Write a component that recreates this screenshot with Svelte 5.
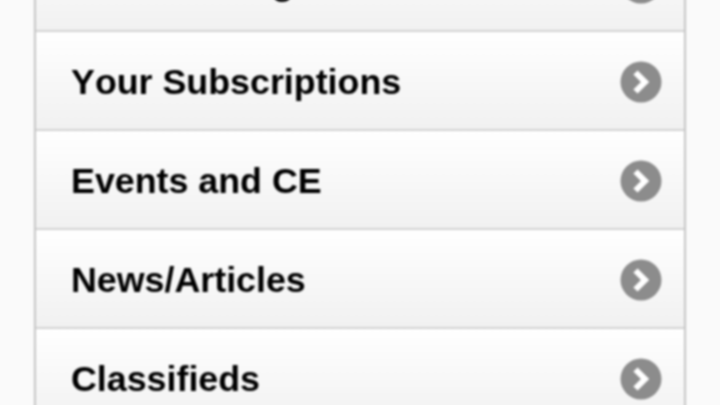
<script>
  const items = ["Your Postings", "Your Subscriptions", "Events and CE", "News/Articles", "Classifieds"];
</script>

<div class="page">
  <ul class="list">
    {#each items as item}
      <li class="row">
        <span class="label">{item}</span>
        <svg class="chevron" viewBox="0 0 42 42" width="42" height="42" aria-hidden="true">
          <circle cx="21" cy="21" r="20.5" fill="#8c8c8c" />
          <path d="M15.5 11.5 L25 21 L15.5 30.5" fill="none" stroke="#fff" stroke-width="6" />
        </svg>
      </li>
    {/each}
  </ul>
</div>

<style>
  :global(body) {
    margin: 0;
    background: #fafafa;
    overflow: hidden;
  }

  .page {
    height: 405px;
    overflow: hidden;
    padding: 0 34px;
    box-sizing: border-box;
  }

  /* the source is an upscaled phone shot, so everything is soft */
  .list {
    list-style: none;
    margin: -67px 0 0;
    padding: 0;
    border-left: 2px solid #c6c6c6;
    border-right: 2px solid #c6c6c6;
    filter: blur(1px);
  }

  .row {
    height: 99px;
    box-sizing: border-box;
    display: flex;
    align-items: center;
    justify-content: space-between;
    padding: 3px 22px 0 35px;
    background: linear-gradient(#ffffff, #f1f1f1);
    border-bottom: 2px solid #d2d2d2;
  }

  .label {
    font-family: "Liberation Sans", Arial, sans-serif;
    font-weight: bold;
    font-size: 35.8px;
    font-kerning: none;
    color: #000;
  }
</style>
